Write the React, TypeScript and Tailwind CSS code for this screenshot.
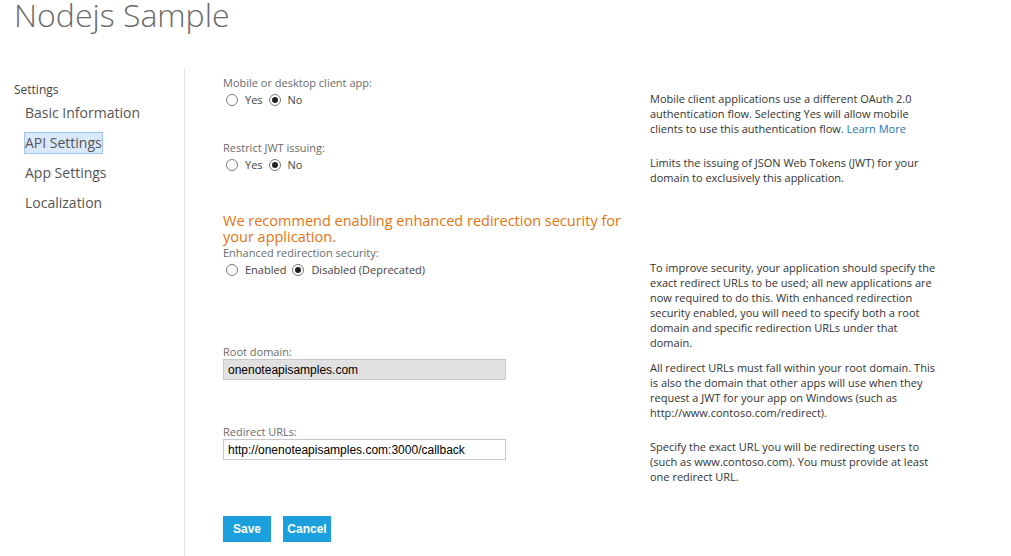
import type { ReactNode } from 'react';

const font = { fontFamily: '"Open Sans", "Noto Sans", sans-serif' };

function Radio({ checked, label }: { checked?: boolean; label: string }) {
  return (
    <span className="inline-flex items-center">
      <span className="ml-[3px] flex h-[12px] w-[12px] items-center justify-center rounded-full border border-[#7a7a7a] bg-white">
        {checked && <span className="h-[6px] w-[6px] rounded-full bg-[#222]" />}
      </span>
      <span className="ml-[7px] mr-[3px] text-[11px] text-[#444]">{label}</span>
    </span>
  );
}

function Label({ children, className = '' }: { children: ReactNode; className?: string }) {
  return (
    <div className={`text-[11px] leading-[15px] text-[#6b6b6b] ${className}`}>{children}</div>
  );
}

function Help({ lines, className = '' }: { lines: ReactNode[]; className?: string }) {
  return (
    <div className={`text-[11px] leading-[15px] text-[#333] whitespace-nowrap ${className}`}>
      {lines.map((l, i) => (
        <div key={i}>{l}</div>
      ))}
    </div>
  );
}

export default function App() {
  const menu = ['Basic Information', 'API Settings', 'App Settings', 'Localization'];

  return (
    <div className="h-[556px] w-[1011px] overflow-hidden bg-white" style={font}>
      <header className="flex h-[69px] items-start px-[14px]">
        <h1 className="mt-[-5px] text-[32px] font-light leading-[40px] text-[#6a6a6a]">
          Nodejs Sample
        </h1>
      </header>

      <div className="flex h-[487px]">
        <nav className="w-[185px] border-r border-[#e0e0e0] pt-[13px]">
          <div className="pl-[14px] text-[12px] leading-[16px] text-[#444]">Settings</div>
          <ul className="mt-[4px] pl-[24px]">
            {menu.map((item) => (
              <li key={item} className="mb-[8px] leading-[20px]">
                <span
                  className={`inline-block border text-[14px] text-[#555] ${
                    item === 'API Settings'
                      ? 'border-[#9fc4ee] bg-[#d9e8fb]'
                      : 'border-transparent'
                  }`}
                >
                  {item}
                </span>
              </li>
            ))}
          </ul>
        </nav>

        <main className="flex pl-[38px]">
          <div className="w-[427px] pt-[6px]">
            <Label>Mobile or desktop client app:</Label>
            <div className="mt-[2px] flex h-[16px] items-center">
              <Radio label="Yes" />
              <Radio checked label="No" />
            </div>

            <Label className="mt-[32px]">Restrict JWT issuing:</Label>
            <div className="mt-[2px] flex h-[16px] items-center">
              <Radio label="Yes" />
              <Radio checked label="No" />
            </div>

            <p className="mt-[40px] text-[14.5px] leading-[16px] text-[#e8730c]">
              We recommend enabling enhanced redirection security for
              <br />
              your application.
            </p>
            <Label>Enhanced redirection security:</Label>
            <div className="mt-[2px] flex h-[16px] items-center">
              <Radio label="Enabled" />
              <Radio checked label="Disabled (Deprecated)" />
            </div>

            <Label className="mt-[66px]">Root domain:</Label>
            <div
              className="flex h-[21px] w-[283px] items-center border border-[#c9c9c9] bg-[#e1e1e1] px-[4px] text-[12px] text-black"
              style={{ fontFamily: '"Liberation Sans", Arial, sans-serif' }}
            >
              onenoteapisamples.com
            </div>

            <Label className="mt-[44px]">Redirect URLs:</Label>
            <div
              className="flex h-[21px] w-[283px] items-center border border-[#c9c9c9] bg-white px-[4px] text-[12px] text-black"
              style={{ fontFamily: '"Liberation Sans", Arial, sans-serif' }}
            >
              http://onenoteapisamples.com:3000/callback
            </div>

            <div
              className="mt-[56px] flex gap-[12px]"
              style={{ fontFamily: '"Liberation Sans", Arial, sans-serif' }}
            >
              <button className="h-[26px] w-[48px] bg-[#1ca0dd] text-[12px] font-bold text-white">
                Save
              </button>
              <button className="h-[26px] w-[48px] bg-[#1ca0dd] text-[12px] font-bold text-white">
                Cancel
              </button>
            </div>
          </div>

          <div className="w-[300px] pt-[22px]">
            <Help
              lines={[
                'Mobile client applications use a different OAuth 2.0',
                'authentication flow. Selecting Yes will allow mobile',
                <>
                  clients to use this authentication flow.{' '}
                  <a className="text-[#1b75bb]">Learn More</a>
                </>,
              ]}
            />
            <Help
              className="mt-[19px]"
              lines={[
                'Limits the issuing of JSON Web Tokens (JWT) for your',
                'domain to exclusively this application.',
              ]}
            />
            <Help
              className="mt-[75px]"
              lines={[
                'To improve security, your application should specify the',
                'exact redirect URLs to be used; all new applications are',
                'now required to do this. With enhanced redirection',
                'security enabled, you will need to specify both a root',
                'domain and specific redirection URLs under that',
                'domain.',
              ]}
            />
            <Help
              className="mt-[10px]"
              lines={[
                'All redirect URLs must fall within your root domain. This',
                'is also the domain that other apps will use when they',
                'request a JWT for your app on Windows (such as',
                'http://www.contoso.com/redirect).',
              ]}
            />
            <Help
              className="mt-[19px]"
              lines={[
                'Specify the exact URL you will be redirecting users to',
                '(such as www.contoso.com). You must provide at least',
                'one redirect URL.',
              ]}
            />
          </div>
        </main>
      </div>
    </div>
  );
}
